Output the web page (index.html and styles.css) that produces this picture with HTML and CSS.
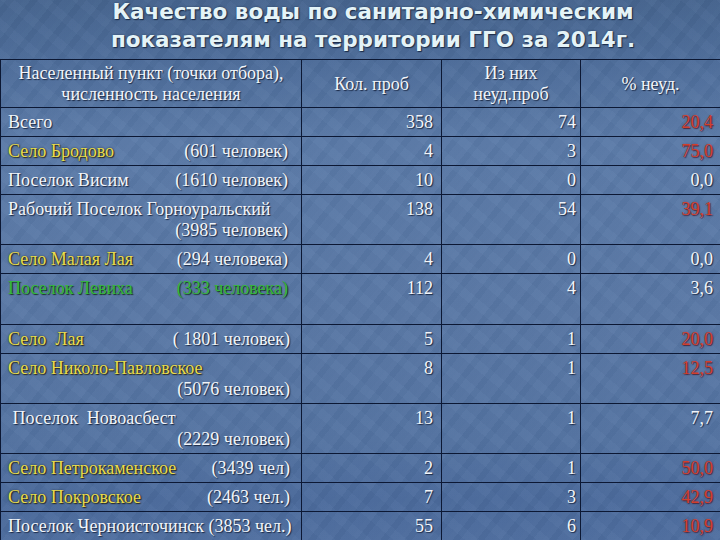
FILE: index.html
```html
<!DOCTYPE html>
<html lang="ru">
<head>
<meta charset="utf-8">
<title>Качество воды</title>
<link rel="stylesheet" href="styles.css">
</head>
<body>
<div class="slide">
  <h1 class="title">Качество воды по санитарно-химическим<br>показателям на территории ГГО за 2014г.</h1>
  <table class="data">
    <colgroup>
      <col class="c1"><col class="c2"><col class="c3"><col class="c4">
    </colgroup>
    <thead>
      <tr>
        <th>Населенный пункт (точки отбора),<br>численность населения</th>
        <th>Кол. проб</th>
        <th>Из них<br>неуд.проб</th>
        <th>% неуд.</th>
      </tr>
    </thead>
    <tbody>
      <tr>
        <td class="name">Всего</td>
        <td class="n2">358</td><td class="n3">74</td><td class="n4 red">20,4</td>
      </tr>
      <tr>
        <td class="name"><div class="split"><span class="yellow">Село Бродово</span><span>(601 человек)</span></div></td>
        <td class="n2">4</td><td class="n3">3</td><td class="n4 red">75,0</td>
      </tr>
      <tr>
        <td class="name"><div class="split"><span>Поселок Висим</span><span>(1610 человек)</span></div></td>
        <td class="n2">10</td><td class="n3">0</td><td class="n4">0,0</td>
      </tr>
      <tr>
        <td class="name"><div>Рабочий Поселок Горноуральский</div><div class="pop">(3985 человек)</div></td>
        <td class="n2">138</td><td class="n3">54</td><td class="n4 red">39,1</td>
      </tr>
      <tr>
        <td class="name"><div class="split"><span class="yellow">Село Малая Лая</span><span>(294 человека)</span></div></td>
        <td class="n2">4</td><td class="n3">0</td><td class="n4">0,0</td>
      </tr>
      <tr class="tall">
        <td class="name"><div class="split green"><span>Поселок Левиха</span><span>(333 человека)</span></div></td>
        <td class="n2">112</td><td class="n3">4</td><td class="n4">3,6</td>
      </tr>
      <tr>
        <td class="name"><div class="split wide"><span class="yellow">Село&nbsp; Лая</span><span>( 1801 человек)</span></div></td>
        <td class="n2">5</td><td class="n3">1</td><td class="n4 red">20,0</td>
      </tr>
      <tr>
        <td class="name"><div class="yellow">Село Николо-Павловское</div><div class="pop wide">(5076 человек)</div></td>
        <td class="n2">8</td><td class="n3">1</td><td class="n4 red">12,5</td>
      </tr>
      <tr>
        <td class="name"><div>&nbsp;Поселок&nbsp; Новоасбест</div><div class="pop wide">(2229 человек)</div></td>
        <td class="n2">13</td><td class="n3">1</td><td class="n4">7,7</td>
      </tr>
      <tr>
        <td class="name"><div class="split wide"><span class="yellow">Село Петрокаменское</span><span>(3439 чел)</span></div></td>
        <td class="n2">2</td><td class="n3">1</td><td class="n4 red">50,0</td>
      </tr>
      <tr>
        <td class="name"><div class="split wide"><span class="yellow">Село Покровское</span><span>(2463 чел.)</span></div></td>
        <td class="n2">7</td><td class="n3">3</td><td class="n4 red">42,9</td>
      </tr>
      <tr>
        <td class="name nowrap">Поселок Черноисточинск (3853 чел.)</td>
        <td class="n2">55</td><td class="n3">6</td><td class="n4 red">10,9</td>
      </tr>
    </tbody>
  </table>
</div>
</body>
</html>
```

FILE: styles.css
```css
html, body {
  margin: 0;
  padding: 0;
}
body {
  width: 720px;
  height: 540px;
  overflow: hidden;
  background-color: #5473a1;
  background-image:
    repeating-linear-gradient(128deg, rgba(255,255,255,0.025) 0 5px, rgba(0,0,0,0.02) 5px 11px, rgba(255,255,255,0.015) 11px 19px),
    repeating-linear-gradient(40deg, rgba(255,255,255,0.015) 0 9px, rgba(0,0,0,0.015) 9px 23px),
    linear-gradient(180deg, #46658f 0px, #4d6d9a 60px, #5a7aa8 140px, #5877a5 320px, #5373a2 440px, #4b6b9c 500px, #4e6e9f 540px);
}
.slide {
  display: flex;
  flex-direction: column;
  width: 720px;
}
.title {
  margin: -2px 0 0 0;
  padding-left: 26px;
  height: 61px;
  box-sizing: border-box;
  font-family: "DejaVu Sans", Verdana, sans-serif;
  font-weight: bold;
  font-size: 21.5px;
  line-height: 28px;
  text-align: center;
  color: #e4f3f7;
  text-shadow: 1px 1px 1px #1b2b47, 0 0 2px rgba(20,35,60,0.6);
  white-space: nowrap;
}
.data {
  width: 720px;
  table-layout: fixed;
  border-collapse: collapse;
  font-family: "Liberation Serif", "Times New Roman", "DejaVu Serif", serif;
  font-size: 18px;
  line-height: 21px;
  color: #f2f5f9;
  text-shadow: 1px 1px 1px #1a2844;
}
.c1 { width: 301px; }
.c2 { width: 140px; }
.c3 { width: 139px; }
.c4 { width: 140px; }
.data th, .data td {
  border: 1.5px solid #0c1834;
  padding: 4px 0 3px 0;
  vertical-align: top;
}
.data th {
  font-weight: normal;
  text-align: center;
  vertical-align: middle;
  padding: 3px 0 2px 0;
}
.data td.name {
  padding-left: 7px;
  padding-right: 13px;
  text-align: left;
}
.data td.nowrap {
  white-space: nowrap;
  padding-right: 0;
}
.split {
  display: flex;
  justify-content: space-between;
}
.split.wide { margin-right: -2px; }
.pop {
  text-align: right;
}
.pop.wide { margin-right: -2px; }
.n2 { text-align: right; padding-right: 8px !important; }
.n3 { text-align: right; padding-right: 4px !important; }
.n4 { text-align: right; padding-right: 7px !important; }
.tall td { height: 43px; }
.yellow {
  color: #e9dc4c;
  text-shadow: 1px 1px 1px #2a2a20, 0 0 2px #1f2c3e;
}
.green {
  color: #33b83a;
  text-shadow: 1px 1px 1px #173020;
}
.red {
  color: #d23e2c;
  text-shadow: 1px 1px 1px #4a2a40, 0 0 2px rgba(120,40,60,0.5);
}
```
